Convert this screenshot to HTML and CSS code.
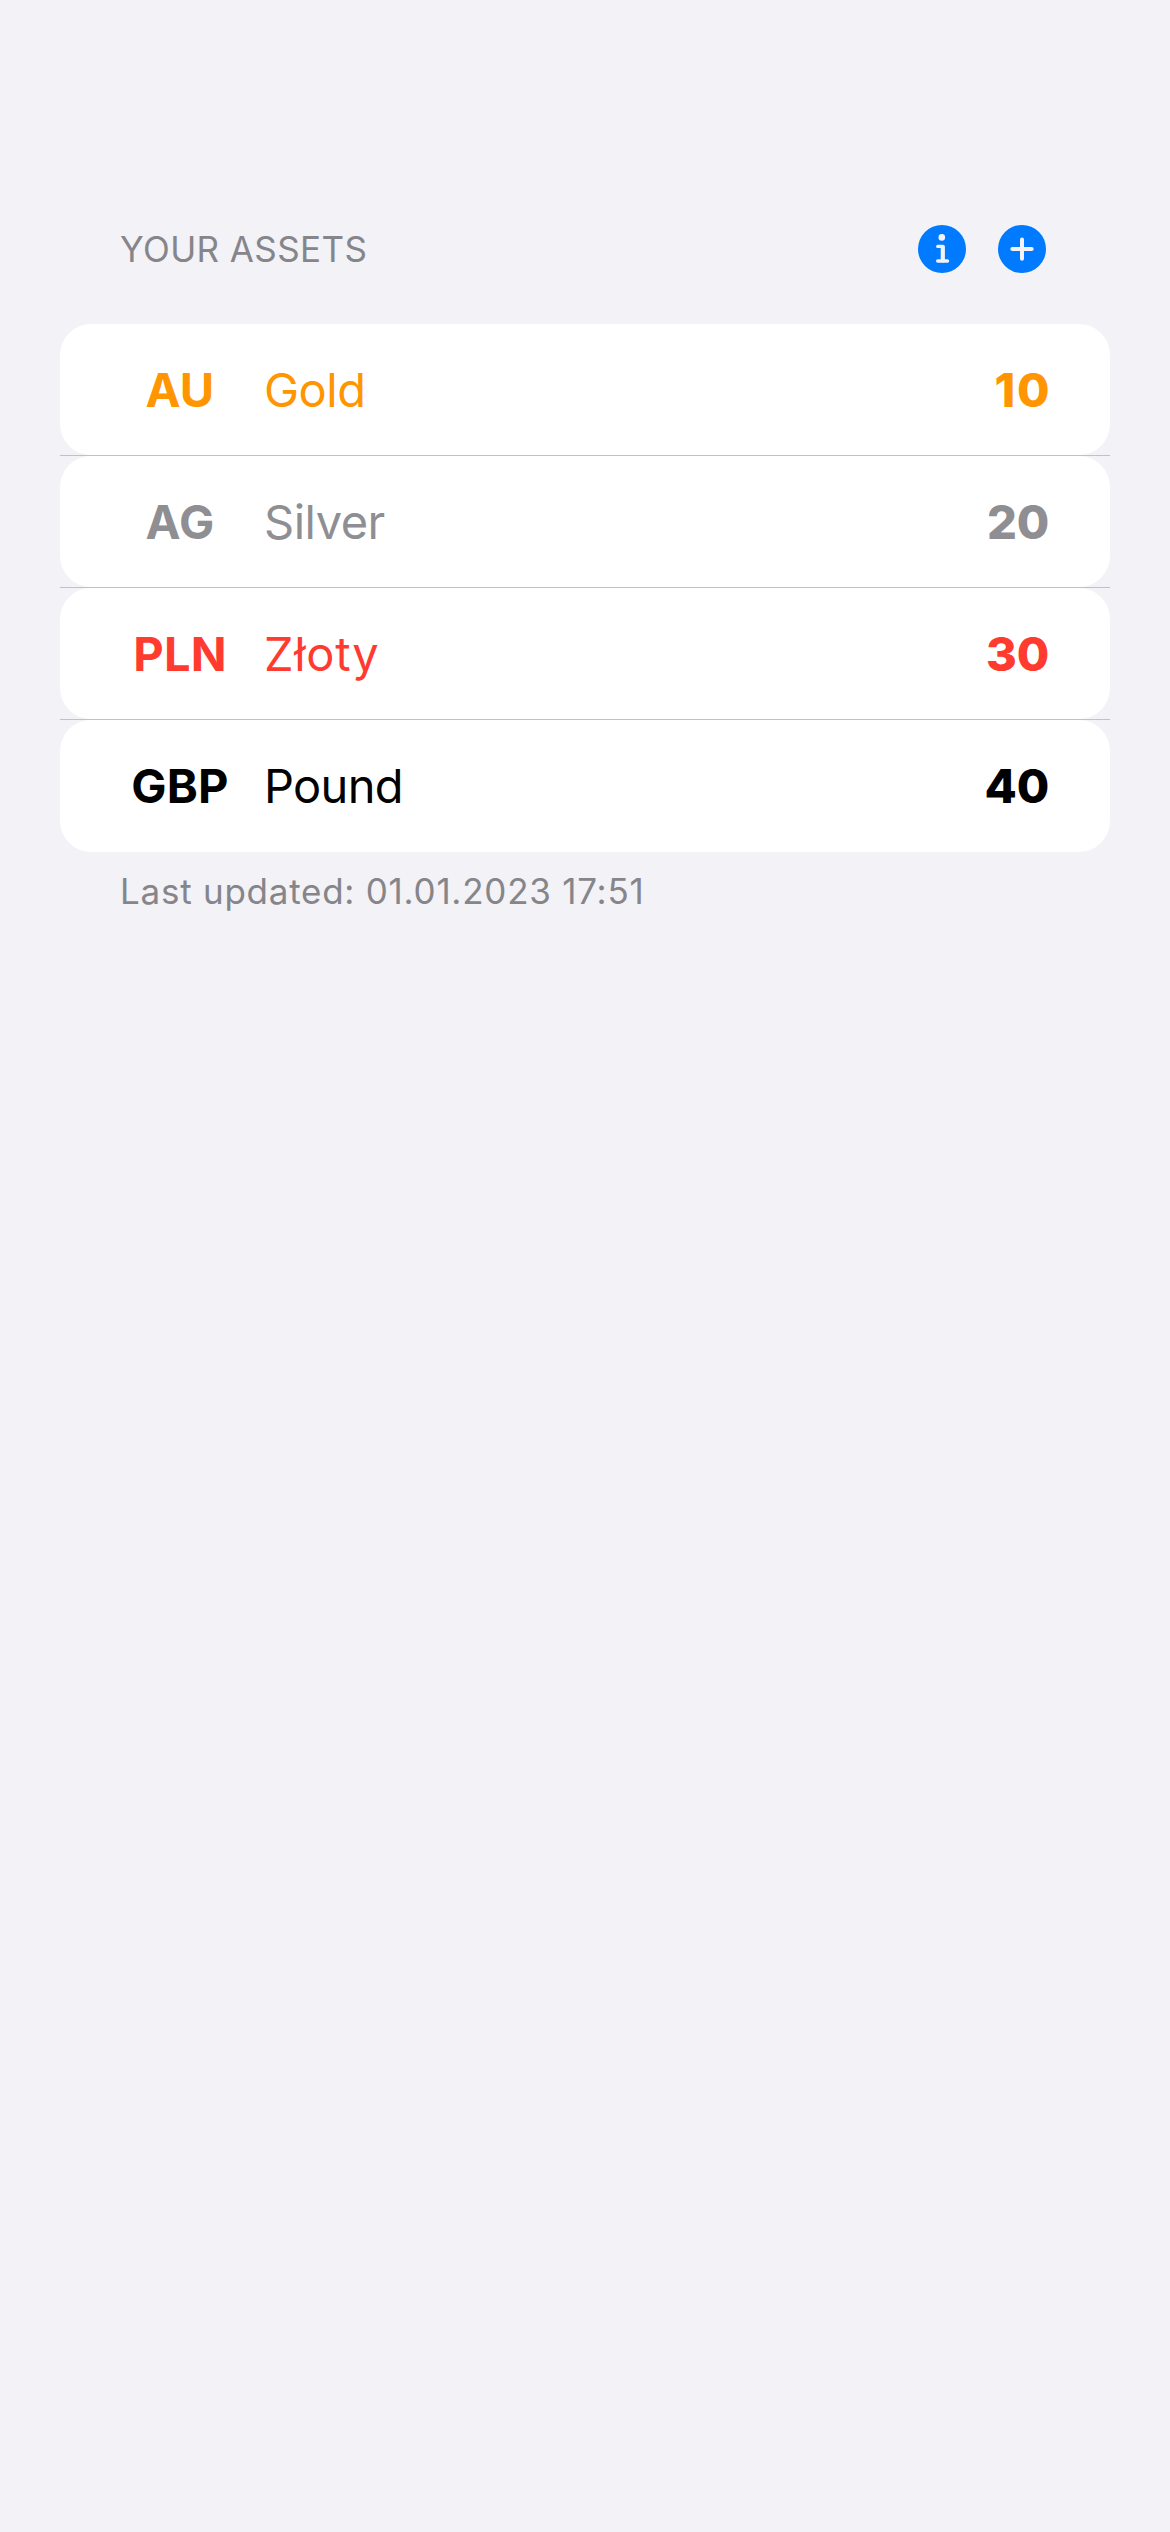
FILE: index.html
```html
<!DOCTYPE html>
<html lang="en">
<head>
<meta charset="utf-8">
<title>Your assets</title>
<link rel="stylesheet" href="styles.css">
</head>
<body>
<main class="screen">
  <header class="section-header">
    <h1 class="section-title">YOUR ASSETS</h1>
    <div class="actions">
      <button class="icon-button" aria-label="Info">
        <svg viewBox="0 0 48 48"><circle cx="24" cy="24" r="24" fill="#007aff"/><circle cx="23.8" cy="12.4" r="3.3" fill="#f2f2f7"/><path d="M19.7 21.4H25" fill="none" stroke="#f2f2f7" stroke-width="3.2" stroke-linecap="round"/><path d="M24.8 22v13.5" fill="none" stroke="#f2f2f7" stroke-width="4.2" stroke-linecap="round"/><path d="M19.7 36h9.8" fill="none" stroke="#f2f2f7" stroke-width="3.4" stroke-linecap="round"/></svg>
      </button>
      <button class="icon-button" aria-label="Add">
        <svg viewBox="0 0 48 48"><circle cx="24" cy="24" r="24" fill="#007aff"/><path d="M24 14.4v19.4M14.3 24.1h19.4" fill="none" stroke="#f2f2f7" stroke-width="4" stroke-linecap="round"/></svg>
      </button>
    </div>
  </header>
  <ul class="assets">
    <li class="asset"><div class="row gold"><span class="code">AU</span><span class="name">Gold</span><span class="amount">10</span></div></li>
    <li class="asset"><div class="row silver"><span class="code">AG</span><span class="name">Silver</span><span class="amount">20</span></div></li>
    <li class="asset"><div class="row zloty"><span class="code">PLN</span><span class="name">Złoty</span><span class="amount">30</span></div></li>
    <li class="asset"><div class="row pound"><span class="code">GBP</span><span class="name">Pound</span><span class="amount">40</span></div></li>
  </ul>
  <footer class="updated">Last updated: 01.01.2023 17:51</footer>
</main>
</body>
</html>
```
FILE: styles.css
```css
* { box-sizing: border-box; }
body { margin: 0; background: #f2f2f7; font-family: Inter, "Liberation Sans", sans-serif; }
.screen { min-height: 2532px; padding: 225px 60px 0; }
.section-header { display: flex; justify-content: space-between; align-items: center; height: 48px; padding: 0 64px 0 60px; margin-bottom: 51px; }
.section-title { margin: 0; font-size: 35px; font-weight: 400; color: #85858a; letter-spacing: 0.4px; }
.actions { display: flex; gap: 32px; }
.icon-button { width: 48px; height: 48px; padding: 0; border: 0; background: none; }
.icon-button svg { display: block; width: 100%; height: 100%; }
.assets { list-style: none; margin: 0; padding: 0; }
.asset { height: 132px; border-bottom: 1px solid #c1c1c5; }
.asset:last-child { border-bottom: 0; }
.row { display: flex; align-items: center; height: 100%; padding: 0 61px 1px; border-radius: 31px; background: #fff; font-size: 47px; }
.code { width: 118px; text-align: center; font-weight: 700; letter-spacing: 0.2px; }
.name { flex: 1; margin-left: 25px; letter-spacing: -0.5px; }
.amount { font-weight: 800; letter-spacing: -0.2px; }
.gold { color: #ff9500; }
.gold .amount { letter-spacing: 1.6px; margin-right: -2px; }
.silver { color: #8e8e93; }
.zloty { color: #ff3b30; }
.zloty .name { letter-spacing: 0.7px; }
.pound { color: #000; }
.pound .name { letter-spacing: -0.7px; }
.updated { padding: 17px 60px; font-size: 35px; line-height: 44px; letter-spacing: 0.75px; color: #85858a; }
```
